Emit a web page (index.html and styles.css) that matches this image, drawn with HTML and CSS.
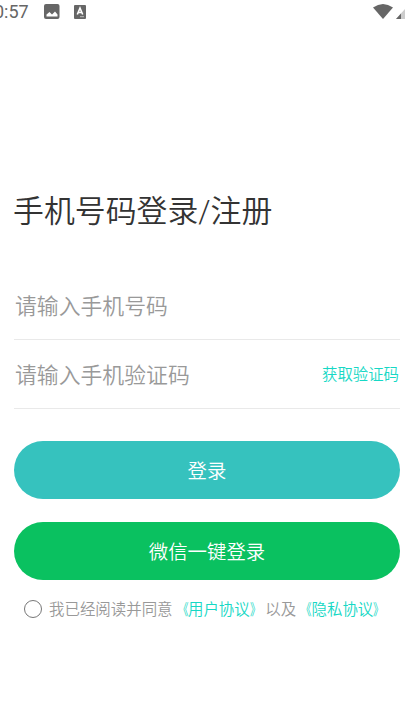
FILE: index.html
```html
<!DOCTYPE html>
<html lang="zh-CN">
<head>
<meta charset="utf-8">
<title>登录</title>
<link rel="stylesheet" href="styles.css">
</head>
<body>
<header class="status">
  <span class="clock">0:57</span>
  <svg class="s-img" viewBox="0 0 16 16"><rect width="15.500" height="15" rx="2" fill="#666"/><path d="M2.500 12.500V10.500L5.500 8 8 10.500 11 7.500 13.500 10.500V12.500Z" fill="#fff"/></svg>
  <svg class="s-a" viewBox="0 0 12 14"><rect width="12" height="14" rx="1" fill="#666"/><path d="M3.300 9.500 6 3 8.700 9.500M4.200 7.500H7.800" fill="none" stroke="#fff" stroke-width="1.600"/><path d="M6 11.700H10" stroke="#bbb"/></svg>
  <svg class="s-wifi" viewBox="0 0 20 15"><path d="M0 3.500Q10-3.500 20 3.500L10 15Z" fill="#666"/></svg>
  <svg class="s-cell" viewBox="0 0 9 15"><path d="M0 15 9 5V15Z" fill="#ccc"/><path d="M0 15 5 9.500V15Z" fill="#666"/></svg>
</header>
<main class="login">
  <h1 class="title">手机号码登录/注册</h1>
  <div class="field"><span class="placeholder">请输入手机号码</span></div>
  <div class="field"><span class="placeholder">请输入手机验证码</span><a class="code">获取验证码</a></div>
  <button class="btn primary">登录</button>
  <button class="btn wechat">微信一键登录</button>
  <div class="agree"><i class="radio"></i><p class="terms">我已经阅读并同意<a><span class="open">《</span>用户协议<span class="close">》</span></a>以及<a><span class="open">《</span>隐私协议<span class="close">》</span></a></p></div>
</main>
</body>
</html>
```
FILE: styles.css
```css
body { margin: 0; background: #fff; font-family: Roboto, "Noto Sans CJK SC", sans-serif; font-weight: 350; overflow: hidden; }
.status { display: flex; height: 24px; align-items: center; color: #666; }
.clock { font-size: 18px; font-weight: 400; margin-left: -6px; width: 50px; line-height: 24px; }
.s-img { width: 16px; height: 16px; }
.s-a { width: 12px; height: 14px; margin-left: 14px; }
.s-wifi { width: 20px; height: 15px; margin-left: auto; margin-bottom: 2px; }
.s-cell { width: 9px; height: 15px; margin-left: 3px; margin-bottom: 1px; }
.login { padding: 164px 5px 0 14px; }
.title { margin: 0 0 35px -1px; font-size: 30.900px; line-height: 48px; font-weight: 350; color: #333; white-space: nowrap; }
.field { display: flex; box-sizing: border-box; height: 69px; padding: 0 1px 2px; align-items: center; justify-content: space-between; border-bottom: 1px solid #e9e9e9; white-space: nowrap; }
.placeholder { font-size: 21.850px; color: #999; }
.code { font-size: 15.400px; color: #16d8c5; }
.btn { display: block; width: 100%; height: 58px; border: 0; border-radius: 29px; padding: 0 0 1px; color: #fff; font: 350 19.400px Roboto, "Noto Sans CJK SC", sans-serif; }
.primary { margin-top: 32.400px; background: #36c2be; }
.wechat { margin-top: 23px; background: #0ac160; }
.agree { display: flex; align-items: center; margin: 16.600px 0 0 10px; height: 24px; }
.radio { box-sizing: border-box; width: 18px; height: 18px; border: 1.500px solid #777; border-radius: 50%; margin-right: 7px; }
.terms { margin: 3px 0 0; font-size: 15.450px; line-height: 24px; color: #999; white-space: nowrap; }
.terms a { color: #16d8c5; }
.open, .close { display: inline-block; transform: scaleX(.7); }
.open { transform-origin: right; }
.close { transform-origin: left; }
```
